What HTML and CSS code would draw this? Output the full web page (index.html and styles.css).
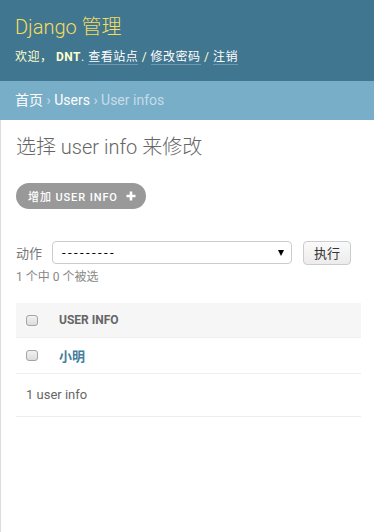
FILE: index.html
```html
<!DOCTYPE html>
<html lang="zh-hans">
<head>
  <meta charset="UTF-8">
  <meta name="viewport" content="width=device-width, initial-scale=1.0">
  <title>选择 user info 来修改 | Django 站点管理员</title>
  <link rel="stylesheet" href="styles.css">
</head>
<body>
  <div id="container">
    <div id="header">
      <div id="branding">
        <h1 id="site-name"><a href="#">Django 管理</a></h1>
      </div>
      <div id="user-tools">
        欢迎， <strong>DNT</strong>. <a href="#">查看站点</a> / <a href="#">修改密码</a> / <a href="#">注销</a>
      </div>
    </div>

    <div class="breadcrumbs">
      <a href="#">首页</a> <span class="sep">›</span> <a href="#">Users</a> <span class="sep">›</span> User infos
    </div>

    <div id="content">
      <h1>选择 user info 来修改</h1>
      <ul class="object-tools">
        <li>
          <a href="#" class="addlink">增加 user info
            <svg width="10" height="10" viewBox="0 0 10 10" aria-hidden="true">
              <path d="M5 0.5v9M0.5 5h9" stroke="#fff" stroke-width="2.6" fill="none"/>
            </svg>
          </a>
        </li>
      </ul>

      <form id="changelist-form">
        <div class="actions">
          <label class="action-label" for="action">动作</label>
          <span class="select-wrap">
            <select id="action" name="action">
              <option value="">---------</option>
              <option value="delete_selected">删除所选的 user infos</option>
            </select>
            <span class="select-arrow"></span>
          </span>
          <button type="button" class="button">执行</button>
        </div>
        <div class="action-counter">1 个中 0 个被选</div>

        <table id="result_list">
          <thead>
            <tr>
              <th class="action-checkbox-column"><input type="checkbox" id="action-toggle"></th>
              <th class="column-title">User info</th>
            </tr>
          </thead>
          <tbody>
            <tr>
              <td class="action-checkbox"><input type="checkbox" name="_selected_action" value="1"></td>
              <th class="field-name"><a href="#">小明</a></th>
            </tr>
          </tbody>
        </table>
        <p class="paginator">1 user info</p>
      </form>
    </div>
  </div>
</body>
</html>
```

FILE: styles.css
```css
html, body {
  height: 100%;
}

body {
  margin: 0;
  padding: 0;
  font-family: Roboto, "Noto Sans CJK SC", sans-serif;
  font-size: 14px;
  color: #333;
  background: #fff;
}

a {
  text-decoration: none;
}

#container {
  min-height: 100%;
  display: flex;
  flex-direction: column;
}

/* header */

#header {
  background: #417690;
  color: #ffc;
  padding: 15px 15px 14px;
}

#site-name {
  margin: 0 0 8px;
  font-size: 20px;
  font-weight: 300;
  line-height: 24px;
}

#site-name a {
  color: #f5dd5d;
}

#user-tools {
  font-size: 12px;
  letter-spacing: 0.5px;
  line-height: 20px;
}

#user-tools strong {
  font-weight: 700;
}

#user-tools a {
  color: #fff;
  border-bottom: 1px solid rgba(255, 255, 255, 0.25);
}

/* breadcrumbs */

.breadcrumbs {
  background: #79aec8;
  padding: 10px 15px;
  font-size: 14px;
  line-height: 19px;
  color: #c4dce8;
}

.breadcrumbs a {
  color: #fff;
}

.breadcrumbs .sep {
  color: #c4dce8;
  font-size: 14px;
}

/* content */

#content {
  flex: 1;
  border-left: 1px solid #ddd;
  padding: 15px 13px 20px 15px;
}

#content h1 {
  margin: 0 0 24px;
  font-size: 20px;
  font-weight: 300;
  line-height: 24px;
  color: #666;
}

.object-tools {
  list-style: none;
  margin: 0 0 32px;
  padding: 0;
  display: flex;
}

.object-tools a {
  display: flex;
  align-items: center;
  gap: 8px;
  height: 26px;
  padding: 0 10px 0 12px;
  background: #999;
  color: #fff;
  border-radius: 15px;
  font-size: 11px;
  font-weight: 500;
  letter-spacing: 0.9px;
  text-transform: uppercase;
}

/* actions */

.actions {
  display: flex;
  align-items: center;
  height: 23px;
}

.action-label {
  font-size: 13px;
  color: #777;
  width: 36px;
}

.select-wrap {
  position: relative;
  display: block;
  width: 240px;
}

.select-wrap select {
  -webkit-appearance: none;
  appearance: none;
  display: block;
  width: 100%;
  height: 23px;
  margin: 0;
  padding: 0 0 0 9px;
  border: 1px solid #ccc;
  border-radius: 4px;
  background: #fff;
  color: #000;
  font-family: Roboto, "Noto Sans CJK SC", sans-serif;
  font-size: 13px;
  letter-spacing: 2.4px;
}

.select-arrow {
  position: absolute;
  right: 8px;
  top: 9px;
  width: 0;
  height: 0;
  border-left: 3.5px solid transparent;
  border-right: 3.5px solid transparent;
  border-top: 6px solid #000;
  pointer-events: none;
}

.button {
  margin-left: 11px;
  height: 24px;
  width: 48px;
  padding: 0;
  border: 1px solid #ccc;
  border-radius: 4px;
  background: linear-gradient(#fafafa, #ececec);
  color: #333;
  font-family: Roboto, "Noto Sans CJK SC", sans-serif;
  font-size: 13px;
}

.action-counter {
  margin-top: 5px;
  font-size: 12px;
  line-height: 16px;
  color: #888;
}

/* results table */

#result_list {
  width: 100%;
  margin-top: 18px;
  border-collapse: collapse;
}

#result_list th,
#result_list td {
  text-align: left;
  vertical-align: middle;
  padding: 0;
}

#result_list thead th {
  background: #f6f6f6;
  height: 34px;
  color: #666;
  font-size: 12px;
  font-weight: 700;
  text-transform: uppercase;
}

#result_list tbody tr {
  border-top: 1px solid #eee;
  border-bottom: 1px solid #eee;
}

#result_list tbody td,
#result_list tbody th {
  height: 35px;
}

.action-checkbox-column,
.action-checkbox {
  width: 23px;
  padding-left: 10px !important;
}

.column-title,
.field-name {
  padding-left: 10px !important;
}

.field-name a {
  color: #447e9b;
  font-size: 13px;
  font-weight: 700;
}

input[type="checkbox"] {
  -webkit-appearance: none;
  appearance: none;
  display: block;
  width: 12px;
  height: 11px;
  margin: 0;
  border: 1px solid #a5a5a5;
  border-radius: 3px;
  background: linear-gradient(#f2f2f2, #dcdcdc);
}

.paginator {
  margin: 0;
  padding: 0 10px;
  height: 42px;
  line-height: 42px;
  font-size: 13px;
  color: #666;
  border-bottom: 1px solid #eee;
}
```
